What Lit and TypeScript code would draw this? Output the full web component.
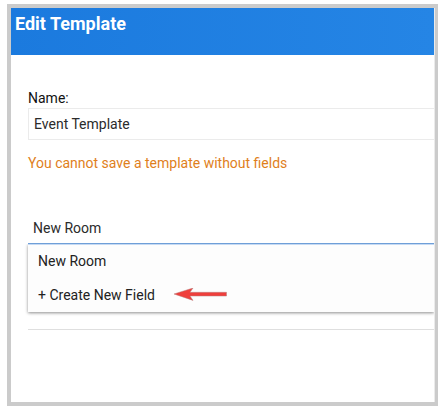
import { LitElement, html, css } from "lit";
import { customElement, state } from "lit/decorators.js";

@customElement("app-root")
export class AppRoot extends LitElement {
  @state() private templateName = "Event Template";
  @state() private field = "New Room";
  private options = ["New Room", "+ Create New Field"];

  static styles = css`
    :host {
      display: block;
      box-sizing: border-box;
      min-height: 100vh;
      padding: 4px 8px 4px 7px;
      background: #fff;
      color: #222;
      font: 14px/20px Roboto, sans-serif;
    }
    * {
      box-sizing: border-box;
    }
    .frame {
      min-height: calc(100vh - 8px);
      padding-right: 1px;
      border: 4px solid #cbcbcb;
      border-right-width: 3px;
      background: #fff;
      box-shadow: inset -1px 0 #ebebeb;
    }
    .header {
      height: 47px;
      padding: 4px;
      background: linear-gradient(90deg, #1b7ade, #2585e5);
      color: #fff;
    }
    .title {
      margin: 0;
      font-size: 18px;
      line-height: 24px;
      font-weight: 700;
    }
    .form {
      padding-left: 17px;
    }
    .name {
      display: block;
      padding-top: 33px;
      color: #111;
    }
    .input,
    .combo {
      display: block;
      width: 100%;
      height: 32px;
      margin: 0;
      padding: 0 5px;
      border: 0;
      outline: 0;
      border-radius: 0;
      background: transparent;
      color: #2b2b2b;
      font: inherit;
    }
    .input {
      border: 1px solid #ebebeb;
      border-right: 0;
    }
    .warning {
      margin: 13px 0 39px;
      color: #e07f1c;
    }
    .picker {
      height: 118px;
      border-bottom: 1px solid #dfdfdf;
    }
    .anchor {
      position: relative;
    }
    .combo {
      position: relative;
      z-index: 1;
      border-bottom: 1px solid #6f9fd8;
    }
    .menu {
      position: absolute;
      top: 100%;
      left: 0;
      right: 0;
      background: #fdfdfd;
      box-shadow: inset 0 1px #c6daf3, 0 1px 3px rgba(0, 0, 0, 0.45);
      clip-path: inset(0 0 -8px -8px);
    }
    .option {
      display: flex;
      align-items: center;
      gap: 19px;
      width: 100%;
      height: 34px;
      padding: 0 10px;
      border: 0;
      background: transparent;
      color: #222;
      font: inherit;
      text-align: left;
    }
    .arrow {
      display: block;
      width: 53px;
      height: 14px;
    }
  `;

  private arrow() {
    return html`<svg class="arrow" viewBox="0 0 53 14" aria-hidden="true">
      <path
        d="M0 6 L19 0 L16 4.3 H52.5 V8 H16 L19 12.4 Z"
        fill="#ef3e3b"
        stroke="#b77c7c"
        stroke-width=".5"
      />
    </svg>`;
  }

  render() {
    return html`
      <main class="frame">
        <header class="header"><h1 class="title">Edit Template</h1></header>
        <form class="form" @submit=${(e: Event) => e.preventDefault()}>
          <label class="name" for="name">Name:</label>
          <input
            class="input"
            id="name"
            .value=${this.templateName}
            @input=${(e: Event) => (this.templateName = (e.target as HTMLInputElement).value)}
          />
          <p class="warning" role="alert">You cannot save a template without fields</p>
          <div class="picker">
            <div class="anchor">
              <input
                class="combo"
                role="combobox"
                aria-label="Field"
                aria-expanded="true"
                aria-controls="fields"
                .value=${this.field}
                @input=${(e: Event) => (this.field = (e.target as HTMLInputElement).value)}
              />
              <div class="menu" id="fields" role="listbox">
                ${this.options.map(
                  (option, i) => html`<button
                    class="option"
                    type="button"
                    role="option"
                    @click=${() => (this.field = option)}
                  >
                    <span>${option}</span>${i === 1 ? this.arrow() : null}
                  </button>`
                )}
              </div>
            </div>
          </div>
        </form>
      </main>
    `;
  }
}
